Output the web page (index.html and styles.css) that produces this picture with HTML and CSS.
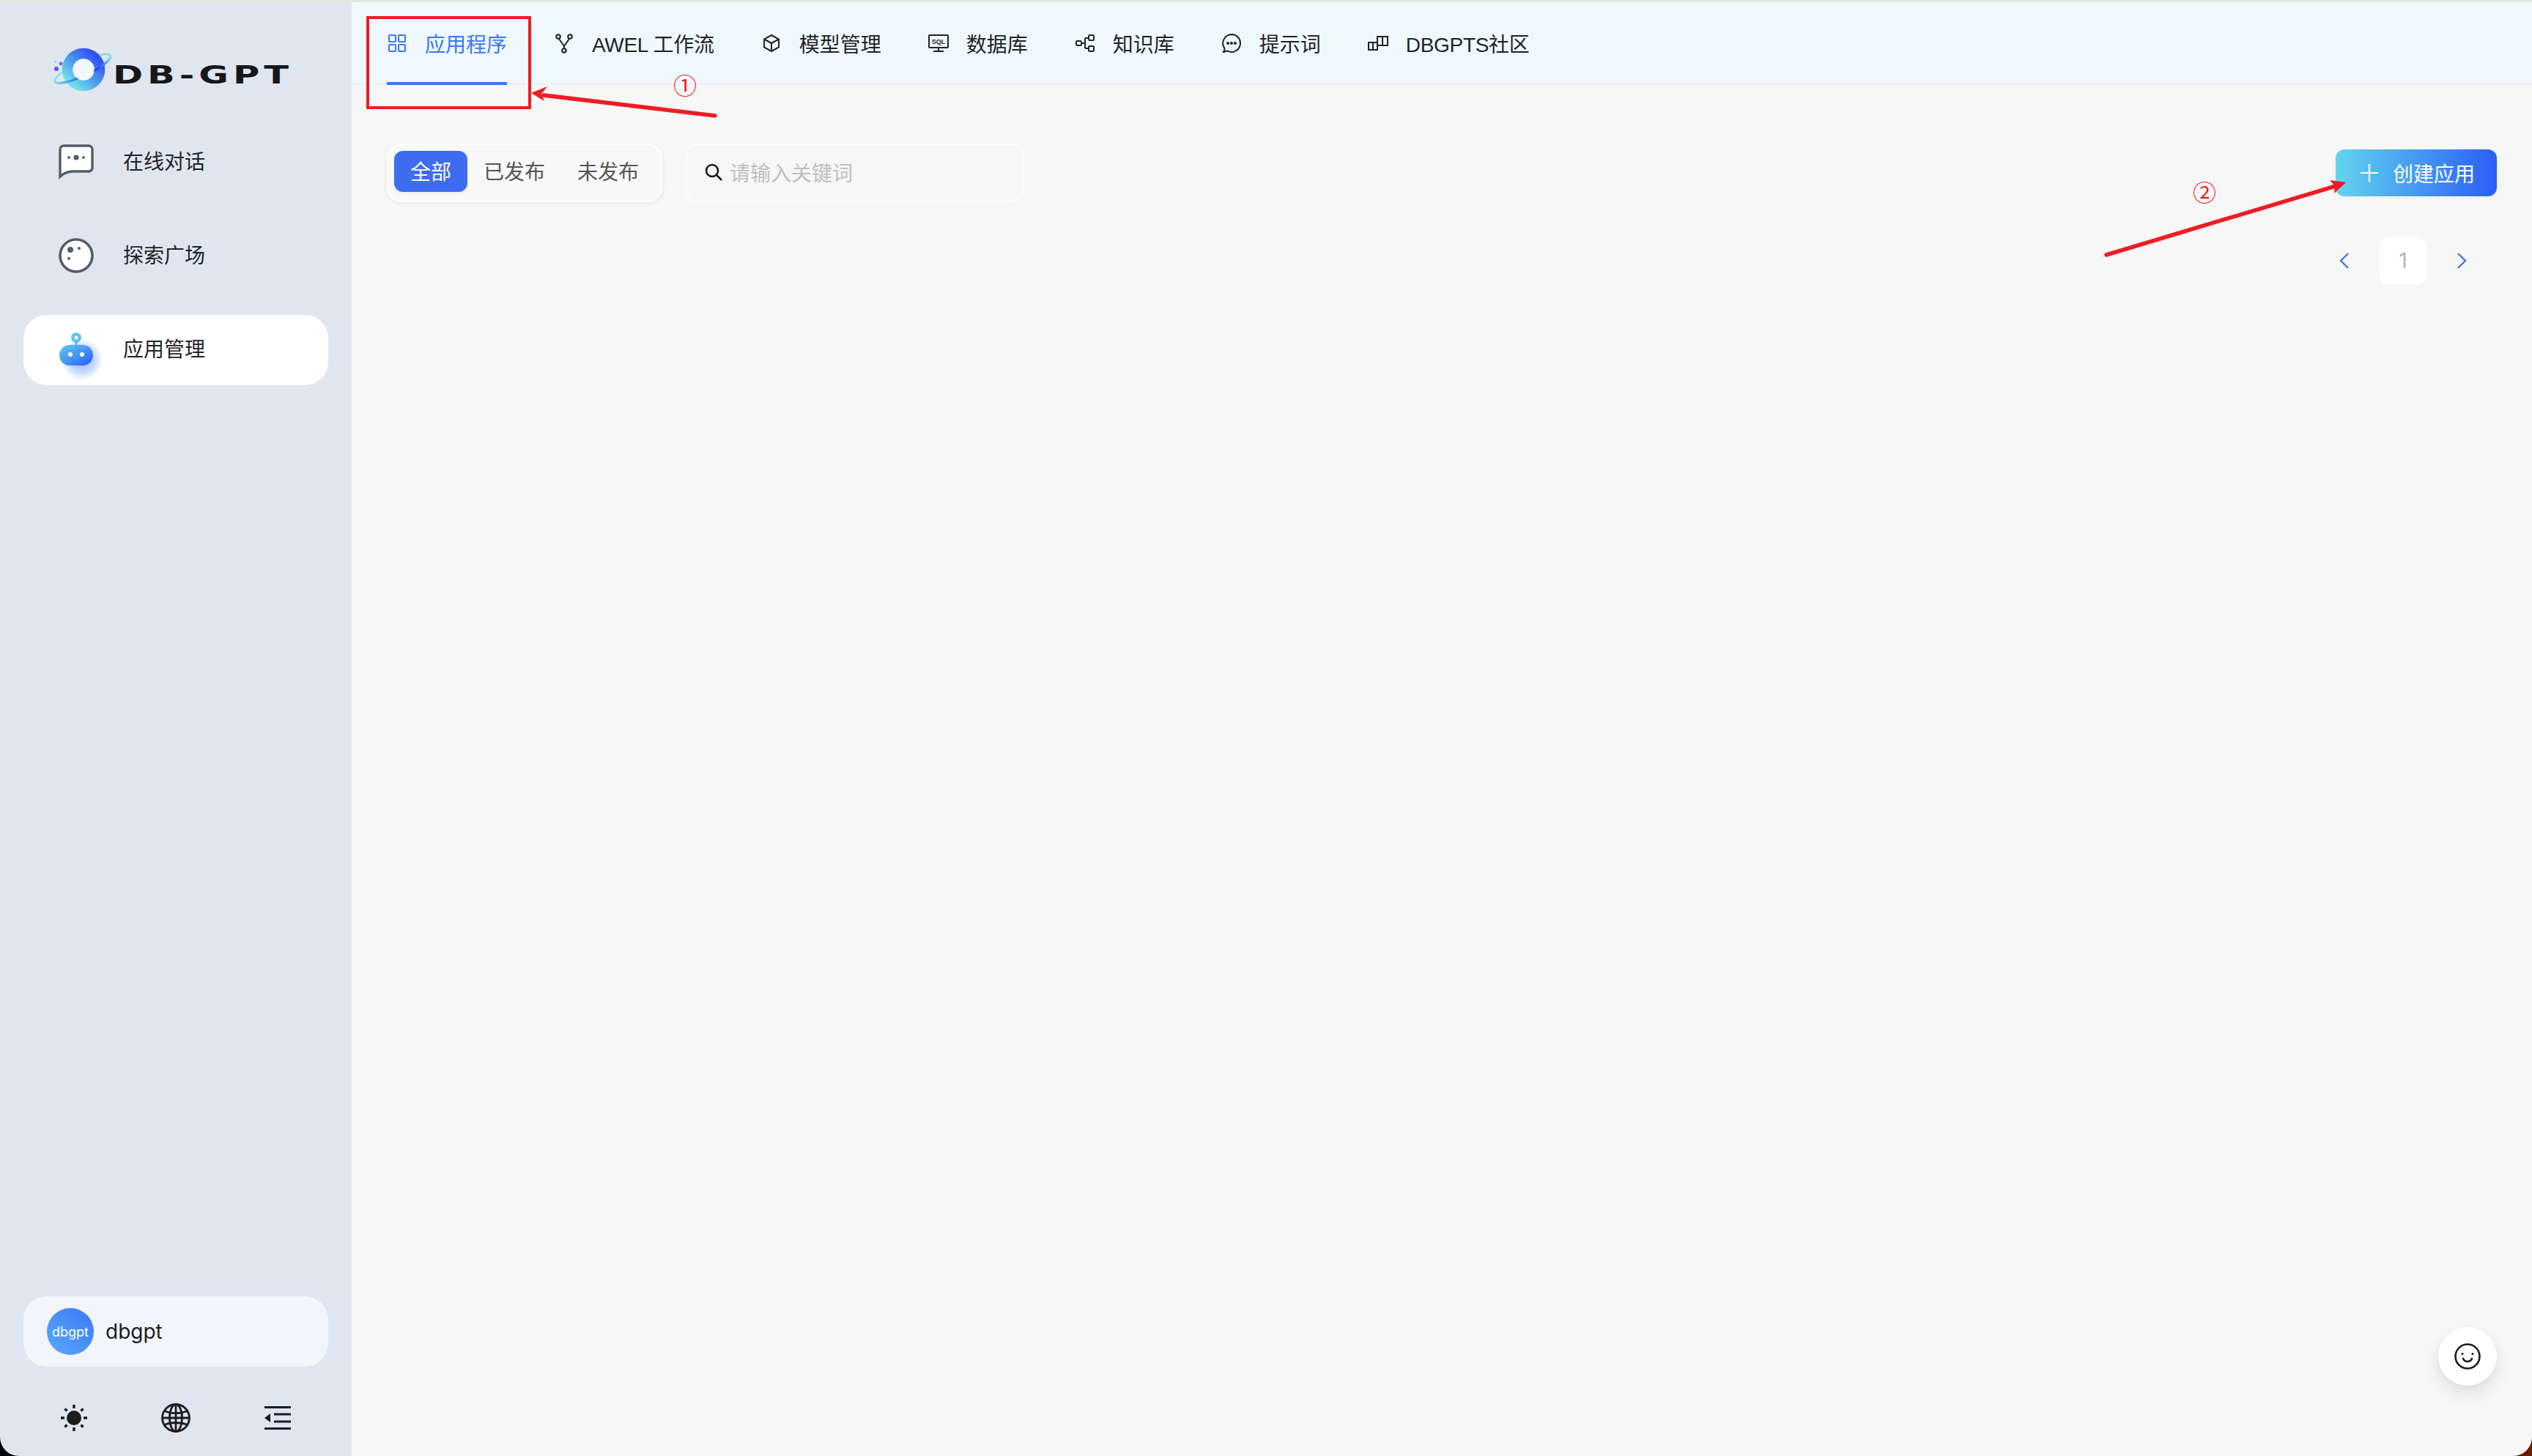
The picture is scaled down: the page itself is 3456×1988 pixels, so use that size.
FILE: index.html
```html
<!DOCTYPE html>
<html lang="zh-CN">
<head>
<meta charset="utf-8">
<title>DB-GPT</title>
<link rel="stylesheet" href="styles.css">
</head>
<body>
<div class="app">
  <aside class="sidebar">
    <div class="logo">
      <svg class="logo-mark" viewBox="0 0 84 60" width="84" height="60">
        <defs>
          <linearGradient id="planet" x1="0.9" y1="0.1" x2="0.15" y2="0.95">
            <stop offset="0" stop-color="#3050f5"/><stop offset="0.5" stop-color="#4b97ee"/><stop offset="1" stop-color="#6fe0e8"/>
          </linearGradient>
          <linearGradient id="orbit" gradientUnits="userSpaceOnUse" x1="2" y1="47" x2="78" y2="11">
            <stop offset="0" stop-color="#6fe3e0"/><stop offset="0.3" stop-color="#3a78f0"/><stop offset="0.72" stop-color="#2040f0"/><stop offset="1" stop-color="#7fe5ea"/>
          </linearGradient>
        </defs>
        <ellipse cx="40" cy="29" rx="42" ry="10" transform="rotate(-25 40 29)" fill="none" stroke="#72e2e6" stroke-width="2.400"/>
        <circle cx="41" cy="30" r="22" fill="none" stroke="url(#planet)" stroke-width="14.500"/>
        <path d="M2 46.700A42 10 -25 0 0 78 11.300" fill="none" stroke="url(#orbit)" stroke-width="2.800"/>
        <circle cx="41" cy="30" r="14.500" fill="#f4f7fb"/>
        <circle cx="4" cy="29" r="3" fill="#5a55ee"/><circle cx="10" cy="22" r="2.400" fill="#4a78ee"/><circle cx="3" cy="19" r="1.600" fill="#7fdcf0"/>
      </svg>
      <span class="logo-text">DB-GPT</span>
    </div>
    <nav class="side-nav">
      <a class="side-item">
        <svg class="side-icon" viewBox="0 0 48 48" width="48" height="48"><path d="M2 44V7a5 5 0 0 1 5-5h34a5 5 0 0 1 5 5v25a5 5 0 0 1-5 5H20C11 37 6 40 2 44Z" fill="#fff" stroke="#555c68" stroke-width="3.400"/><circle cx="24" cy="18" r="3.600" fill="#555c68"/><circle cx="14" cy="18" r="1.900" fill="#555c68"/><circle cx="34" cy="18" r="1.900" fill="#555c68"/></svg>
        <span class="side-label">在线对话</span>
      </a>
      <a class="side-item">
        <svg class="side-icon" viewBox="0 0 48 48" width="48" height="48"><circle cx="24" cy="24" r="22" fill="#fff" stroke="#555c68" stroke-width="3.600"/><circle cx="16" cy="16" r="4" fill="#555c68"/><circle cx="28" cy="14" r="2" fill="#555c68"/><circle cx="14" cy="28" r="2" fill="#555c68"/></svg>
        <span class="side-label">探索广场</span>
      </a>
      <a class="side-item active">
        <span class="robot">
          <span class="robot-glow"></span>
          <svg class="side-icon robot-svg" viewBox="0 0 48 48" width="48" height="48">
            <defs><linearGradient id="bot" x1="0" y1="0" x2="1" y2="1"><stop offset="0" stop-color="#62cdf2"/><stop offset="1" stop-color="#2b5cf4"/></linearGradient></defs>
            <circle cx="24" cy="8" r="7" fill="#5ec5f2"/><circle cx="24" cy="8" r="2.400" fill="#fff"/><rect x="22.500" y="13" width="3" height="6" fill="#58b5f2"/>
            <rect x="1" y="18" width="46" height="28" rx="14" fill="url(#bot)"/><circle cx="16" cy="31" r="3" fill="#fff"/><circle cx="32" cy="31" r="3" fill="#fff"/>
          </svg>
        </span>
        <span class="side-label">应用管理</span>
      </a>
    </nav>
    <div class="side-bottom">
      <div class="user-box">
        <span class="avatar">dbgpt</span>
        <span class="user-name">dbgpt</span>
      </div>
      <div class="tools">
        <svg viewBox="0 0 36 36" width="36" height="36"><circle cx="18" cy="18" r="10" fill="#1c1c1e"/><g stroke="#1c1c1e" stroke-width="3.400"><path d="M18 0v5M18 31v5M0 18h5M31 18h5"/><path d="M5.500 5.500l3 3M27.500 27.500l3 3M5.500 30.500l3-3M27.500 8.500l3-3"/></g></svg>
        <svg viewBox="0 0 40 40" width="40" height="40" fill="none" stroke="#1c1c1e" stroke-width="2.800"><circle cx="20" cy="20" r="18.500"/><ellipse cx="20" cy="20" rx="8.500" ry="18.500"/><path d="M20 1.500v37M1.500 20h37M4.500 10.500C13 14.500 27 14.500 35.500 10.500M4.500 29.500C13 25.500 27 25.500 35.500 29.500"/></svg>
        <svg viewBox="0 0 36 32" width="36" height="32"><g fill="#1c1c1e"><rect width="36" height="3"/><rect x="13" y="9.500" width="23" height="3"/><rect x="13" y="19.500" width="23" height="3"/><rect y="29" width="36" height="3"/><path d="M8 10v12L0 16Z"/></g></svg>
      </div>
    </div>
  </aside>
  <main class="main">
    <header class="tabs">
      <a class="tab active">
        <svg class="tab-icon" viewBox="0 0 28 28" fill="none" stroke="currentColor" stroke-width="2"><rect x="3" y="3" width="9" height="9" rx="1"/><rect x="16" y="3" width="9" height="9" rx="1"/><rect x="3" y="16" width="9" height="9" rx="1"/><rect x="16" y="16" width="9" height="9" rx="1"/></svg>
        <span>应用程序</span>
      </a>
      <a class="tab">
        <svg class="tab-icon" viewBox="0 0 28 28" fill="none" stroke="currentColor" stroke-width="2"><circle cx="6" cy="5" r="2.800"/><circle cx="22" cy="5" r="2.800"/><circle cx="14" cy="24" r="2.800"/><path d="M7 8l7 10 7-10M14 18v3"/></svg>
        <span class="tight">AWEL 工作流</span>
      </a>
      <a class="tab">
        <svg class="tab-icon" viewBox="0 0 28 28" fill="none" stroke="currentColor" stroke-width="2"><path d="M14 3l10 5.500v11L14 25 4 19.500v-11Z"/><path d="M4 8.500l10 5.500 10-5.500M14 14v11"/></svg>
        <span>模型管理</span>
      </a>
      <a class="tab">
        <svg class="tab-icon" viewBox="0 0 28 28" fill="none" stroke="currentColor" stroke-width="2"><rect x="1" y="3" width="26" height="17" rx="1"/><path d="M14 20v5M7 25h14"/><text class="sql" x="14" y="15" text-anchor="middle">SQL</text></svg>
        <span>数据库</span>
      </a>
      <a class="tab">
        <svg class="tab-icon" viewBox="0 0 28 28" fill="none" stroke="currentColor" stroke-width="2"><rect x="2" y="11" width="7" height="6" rx="1.500"/><rect x="19" y="3" width="7" height="7" rx="1.500"/><rect x="19" y="18" width="7" height="7" rx="1.500"/><path d="M9 14h5M14 7v14M14 7h5M14 21h5"/></svg>
        <span>知识库</span>
      </a>
      <a class="tab">
        <svg class="tab-icon" viewBox="0 0 28 28" fill="none" stroke="currentColor" stroke-width="2"><path d="M14 2a12 12 0 1 1-6 22.400c-2 1-3.500 1.600-5 1.600 1-1.500 1.500-3 1.500-5A12 12 0 0 1 14 2Z"/><circle cx="9" cy="14" r="1" fill="currentColor"/><circle cx="14" cy="14" r="1" fill="currentColor"/><circle cx="19" cy="14" r="1" fill="currentColor"/></svg>
        <span>提示词</span>
      </a>
      <a class="tab">
        <svg class="tab-icon" viewBox="0 0 28 28" fill="none" stroke="currentColor" stroke-width="2"><path d="M1 13h12v10H1ZM7 13V23M13 17h14V5H13v12M20 5v12"/></svg>
        <span class="tight">DBGPTS社区</span>
      </a>
    </header>
    <section class="content">
      <div class="toolbar">
        <div class="filters">
          <div class="segmented">
            <span class="seg on">全部</span>
            <span class="seg">已发布</span>
            <span class="seg">未发布</span>
          </div>
          <div class="search">
            <svg viewBox="0 0 24 24" width="24" height="24" fill="none" stroke="#1c1c1e" stroke-width="2.600"><circle cx="10" cy="10" r="8"/><path d="M16 16l7 7"/></svg>
            <span>请输入关键词</span>
          </div>
        </div>
        <button class="create">
          <svg viewBox="0 0 28 28" width="28" height="28" stroke="#fff" stroke-width="2.200"><path d="M14 2v24M2 14h24"/></svg>
          <span>创建应用</span>
        </button>
      </div>
      <div class="pager">
        <span class="page-btn"><svg viewBox="0 0 14 24" width="14" height="24" fill="none" stroke="#3a6ff0" stroke-width="2.200"><path d="M12 2L2 12l10 10"/></svg></span>
        <span class="page-btn current">1</span>
        <span class="page-btn"><svg viewBox="0 0 14 24" width="14" height="24" fill="none" stroke="#3a6ff0" stroke-width="2.200"><path d="M2 2l10 10L2 22"/></svg></span>
      </div>
    </section>
  </main>
</div>
<button class="float-btn"><svg viewBox="0 0 36 36" width="36" height="36" fill="none" stroke="#1c1c1e" stroke-width="2.600"><circle cx="18" cy="18" r="16.500"/><path d="M12 21a6.500 6.500 0 0 0 12 0" stroke-linecap="round"/><circle cx="11" cy="14.500" r="1.600" fill="#1c1c1e" stroke="none"/><circle cx="25" cy="14.500" r="1.600" fill="#1c1c1e" stroke="none"/></svg></button>
<svg class="marks" viewBox="0 0 3456 1988" width="3456" height="1988">
  <rect x="502" y="24" width="221" height="123" fill="none" stroke="#ed1c24" stroke-width="4"/>
  <path d="M976 158L742 130" stroke="#ed1c24" stroke-width="5.500" stroke-linecap="round"/>
  <path d="M725 127L747 118 739 128 743 138Z" fill="#ed1c24"/>
  <path d="M2875 348L3188 254" stroke="#ed1c24" stroke-width="5.500" stroke-linecap="round"/>
  <path d="M3202 249L3180 246 3187 254 3186 264Z" fill="#ed1c24"/>
  <text class="mark-num" x="935" y="129" text-anchor="middle">①</text>
  <text class="mark-num" x="3009" y="275" text-anchor="middle">②</text>
</svg>
</body>
</html>
```
FILE: styles.css
```css
* { box-sizing: border-box; }
html, body { margin: 0; height: 100%; }
body {
  background: linear-gradient(90deg, #000 50%, #6b1c08 50%);
  font-family: "Inter", "Noto Sans CJK SC", sans-serif;
  color: #1f2329;
  overflow: hidden;
  position: relative;
}
.app { display: flex; height: 1988px; width: 3456px; border-top: 3px solid #e6e6e1; }
.sidebar {
  width: 480px;
  flex: none;
  background: #e0e6f0;
  border-bottom-left-radius: 26px;
  padding: 0 32px;
  display: flex;
  flex-direction: column;
}
.logo { display: flex; align-items: center; height: 124px; margin-top: 33px; margin-left: 41px; }
.logo-mark { margin-top: -6px; flex: none; }
.logo-text {
  display: inline-block;
  font-family: "DejaVu Sans", sans-serif;
  font-weight: 700;
  font-size: 33px;
  line-height: 1;
  letter-spacing: 4px;
  color: #16171a;
  margin: 8px 0 0 -3px;
  transform: scaleX(1.5);
  transform-origin: left center;
}
.side-nav { display: flex; flex-direction: column; gap: 32px; margin-top: 14px; }
.side-item {
  display: flex;
  align-items: center;
  height: 96px;
  padding-left: 48px;
  border-radius: 32px;
  font-size: 28px;
  color: #1f2329;
}
.side-label { margin-left: 40px; padding-bottom: 6px; }
.side-item.active { background: #fff; }
.side-icon { display: block; flex: none; margin-bottom: 2px; }
.robot { position: relative; display: block; width: 48px; height: 48px; margin-top: -2px; }
.robot-glow {
  position: absolute;
  left: 4px;
  top: 10px;
  width: 56px;
  height: 56px;
  border-radius: 50%;
  background: radial-gradient(circle, #8fb2f8 0%, rgba(160,190,250,.55) 45%, rgba(255,255,255,0) 72%);
}
.robot-svg { position: relative; }
.side-bottom { margin-top: auto; }
.user-box {
  display: flex;
  align-items: center;
  height: 96px;
  padding-left: 32px;
  border-radius: 32px;
  background: #f2f5fa;
}
.avatar {
  width: 64px;
  height: 64px;
  border-radius: 50%;
  background: linear-gradient(45deg, #5aa9fa, #3b78f6);
  color: #fff;
  font-size: 18px;
  display: flex;
  align-items: center;
  justify-content: center;
}
.user-name { margin-left: 16px; font-size: 28px; color: #1c1c1e; }
.tools {
  height: 122px;
  padding: 18px 51px 0 51px;
  display: flex;
  align-items: center;
  justify-content: space-between;
  background-image: linear-gradient(90deg, #e9edf4 50%, transparent 50%);
  background-size: 8px 1px;
  background-repeat: repeat-x;
  background-position: 0 16px;
}
.main { flex: 1; display: flex; flex-direction: column; background: #f7f7f7; border-bottom-right-radius: 26px; }
.tabs {
  display: flex;
  gap: 64px;
  height: 113px;
  padding-left: 48px;
  background: #eff8fc;
  border-bottom: 2px solid #eef0f1;
  font-family: "Liberation Sans", "Noto Sans CJK SC", sans-serif;
}
.tab {
  display: flex;
  align-items: center;
  height: 113px;
  font-size: 28px;
  color: #1f2329;
  white-space: nowrap;
  border-bottom: 4px solid transparent;
  padding-top: 2px;
}
.tab-icon { width: 28px; height: 28px; margin-right: 24px; flex: none; }
.tab.active { color: #3b76f6; border-bottom-color: #3b76f6; }
.tight { letter-spacing: -.3px; }
.sql { font: 700 9px "Liberation Sans Narrow", "Liberation Sans", sans-serif; fill: currentColor; stroke: none; }
.content { padding: 80px 48px 0; }
.toolbar { display: flex; justify-content: space-between; align-items: flex-start; }
.filters { display: flex; gap: 32px; }
.segmented {
  display: flex;
  height: 80px;
  padding: 8px 8px 12px;
  border: 2px solid #fff;
  border-radius: 20px;
  background: #f8f8f8;
  box-shadow: 0 2px 6px rgba(0,0,0,.07);
}
.seg {
  display: flex;
  align-items: center;
  padding: 0 22px 2px;
  border-radius: 12px;
  font-size: 28px;
  color: #555;
}
.seg.on { background: #3d6cf0; color: #fff; box-shadow: 0 2px 4px rgba(0,0,0,.06); }
.search {
  display: flex;
  align-items: center;
  gap: 10px;
  width: 461px;
  height: 80px;
  padding: 0 0 2px 24px;
  border: 2px solid #fcfcfc;
  border-radius: 16px;
  font-size: 28px;
  color: #bfbfbf;
}
.create {
  display: flex;
  align-items: center;
  gap: 18px;
  width: 220px;
  height: 64px;
  margin-top: 8px;
  padding: 0 0 0 32px;
  border: 0;
  border-radius: 12px;
  background: linear-gradient(90deg, #61d5ee, #2b5ef7);
  color: #fff;
  font: inherit;
  font-size: 28px;
  box-shadow: 0 2px 4px rgba(0,0,0,.04);
}
.pager { display: flex; justify-content: flex-end; gap: 16px; margin-top: 48px; padding-right: 16px; }
.page-btn {
  width: 64px;
  height: 64px;
  display: flex;
  align-items: center;
  justify-content: center;
  border-radius: 12px;
  font-size: 28px;
}
.page-btn.current { background: #fff; color: #b3b3bd; }
.float-btn {
  position: absolute;
  left: 3328px;
  top: 1812px;
  width: 80px;
  height: 80px;
  display: flex;
  align-items: center;
  justify-content: center;
  padding: 0;
  border: 0;
  border-radius: 50%;
  background: #fff;
  box-shadow: 0 12px 32px rgba(0,0,0,.08), 0 6px 12px rgba(0,0,0,.05);
}
.marks { position: absolute; left: 0; top: 0; pointer-events: none; }
.mark-num { font-family: "Noto Sans CJK SC", sans-serif; font-size: 32px; fill: #ed1c24; }
```
